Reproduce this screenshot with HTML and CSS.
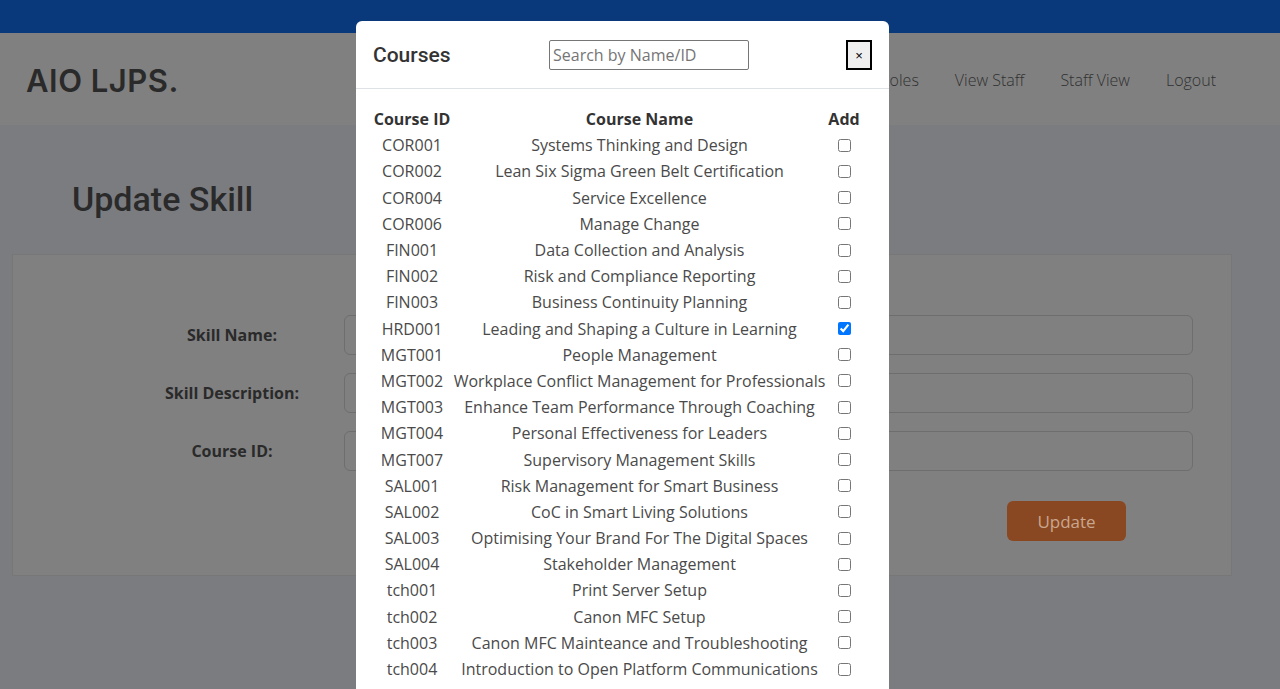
FILE: index.html
```html
<!DOCTYPE html>
<html lang="en">
<head>
<meta charset="utf-8">
<title>Update Skill</title>
<link rel="stylesheet" href="styles.css">
</head>
<body>
<div class="topbar"></div>
<header class="navbar">
  <div class="logo">AIO LJPS.</div>
  <nav class="nav">
    <a>View Roles</a>
    <a>View Staff</a>
    <a>Staff View</a>
    <a>Logout</a>
  </nav>
</header>
<main class="main">
  <h1 class="page-title">Update Skill</h1>
  <section class="card">
    <div class="form-row">
      <label class="form-label">Skill Name:</label>
      <div class="form-input"></div>
    </div>
    <div class="form-row">
      <label class="form-label">Skill Description:</label>
      <div class="form-input"></div>
    </div>
    <div class="form-row">
      <label class="form-label">Course ID:</label>
      <div class="form-input"></div>
    </div>
    <div class="actions">
      <button class="btn-update">Update</button>
    </div>
  </section>
</main>

<div class="modal">
  <div class="modal-header">
    <h5 class="modal-title">Courses</h5>
    <input class="search" type="text" placeholder="Search by Name/ID">
    <button class="close">×</button>
  </div>
  <div class="modal-body">
    <div class="table">
      <div class="th">Course ID</div><div class="th">Course Name</div><div class="th">Add</div>
      <div class="td">COR001</div><div class="td">Systems Thinking and Design</div><div class="td"><input type="checkbox"></div>
      <div class="td">COR002</div><div class="td">Lean Six Sigma Green Belt Certification</div><div class="td"><input type="checkbox"></div>
      <div class="td">COR004</div><div class="td">Service Excellence</div><div class="td"><input type="checkbox"></div>
      <div class="td">COR006</div><div class="td">Manage Change</div><div class="td"><input type="checkbox"></div>
      <div class="td">FIN001</div><div class="td">Data Collection and Analysis</div><div class="td"><input type="checkbox"></div>
      <div class="td">FIN002</div><div class="td">Risk and Compliance Reporting</div><div class="td"><input type="checkbox"></div>
      <div class="td">FIN003</div><div class="td">Business Continuity Planning</div><div class="td"><input type="checkbox"></div>
      <div class="td">HRD001</div><div class="td">Leading and Shaping a Culture in Learning</div><div class="td"><input type="checkbox" checked></div>
      <div class="td">MGT001</div><div class="td">People Management</div><div class="td"><input type="checkbox"></div>
      <div class="td">MGT002</div><div class="td">Workplace Conflict Management for Professionals</div><div class="td"><input type="checkbox"></div>
      <div class="td">MGT003</div><div class="td">Enhance Team Performance Through Coaching</div><div class="td"><input type="checkbox"></div>
      <div class="td">MGT004</div><div class="td">Personal Effectiveness for Leaders</div><div class="td"><input type="checkbox"></div>
      <div class="td">MGT007</div><div class="td">Supervisory Management Skills</div><div class="td"><input type="checkbox"></div>
      <div class="td">SAL001</div><div class="td">Risk Management for Smart Business</div><div class="td"><input type="checkbox"></div>
      <div class="td">SAL002</div><div class="td">CoC in Smart Living Solutions</div><div class="td"><input type="checkbox"></div>
      <div class="td">SAL003</div><div class="td">Optimising Your Brand For The Digital Spaces</div><div class="td"><input type="checkbox"></div>
      <div class="td">SAL004</div><div class="td">Stakeholder Management</div><div class="td"><input type="checkbox"></div>
      <div class="td">tch001</div><div class="td">Print Server Setup</div><div class="td"><input type="checkbox"></div>
      <div class="td">tch002</div><div class="td">Canon MFC Setup</div><div class="td"><input type="checkbox"></div>
      <div class="td">tch003</div><div class="td">Canon MFC Mainteance and Troubleshooting</div><div class="td"><input type="checkbox"></div>
      <div class="td">tch004</div><div class="td">Introduction to Open Platform Communications</div><div class="td"><input type="checkbox"></div>
      <div class="td"></div><div class="td"></div><div class="td"><input type="checkbox"></div>
    </div>
  </div>
</div>
</body>
</html>
```
FILE: styles.css
```css
* { box-sizing: border-box; }
html, body { height: 100%; }
body {
  margin: 0;
  background: #7b7c80;
  font-family: "Open Sans", "Liberation Sans", sans-serif;
  color: #2a2a2a;
  overflow: hidden;
  position: relative;
}
.topbar { height: 33px; background: #0a397b; }
.navbar {
  height: 92px;
  background: #808080;
  display: flex;
  align-items: center;
  padding: 0 26px;
}
.logo {
  font-family: "Inter", "Liberation Sans", sans-serif;
  font-weight: 600;
  font-size: 31px;
  letter-spacing: 0.5px;
  color: #2a2a2a;
  padding-top: 2px;
}
.nav { margin-left: auto; display: flex; gap: 36px; margin-right: 38px; padding-top: 2px; }
.nav a { font-size: 16px; font-weight: 300; color: #303030; }
.main { padding: 0 48px 0 12px; }
.page-title {
  font-family: Roboto, "Liberation Sans", sans-serif;
  font-weight: 500;
  font-size: 34px;
  line-height: 40px;
  margin: 54px 0 35px 60px;
  color: #2a2a2a;
}
.card {
  height: 322px;
  background: #808080;
  border: 1px solid #777;
  padding-top: 60px;
}
.form-row { display: flex; align-items: center; height: 40px; margin-bottom: 18px; }
.form-label {
  width: 224px;
  margin-left: 107px;
  text-align: center;
  font-weight: 700;
  font-size: 16px;
  color: #2a2a2a;
}
.form-input {
  width: 849px;
  height: 40px;
  border: 1px solid #6e6e6e;
  border-radius: 6px;
  background: #808080;
}
.actions { display: flex; justify-content: flex-end; padding-right: 105px; margin-top: 30px; }
.btn-update {
  width: 119px;
  height: 40px;
  border: none;
  border-radius: 6px;
  background: #8a4822;
  color: #c9a68e;
  font-family: "Open Sans", sans-serif;
  font-size: 17px;
}
.modal {
  position: absolute;
  left: 356px;
  top: 21px;
  width: 533px;
  height: 700px;
  background: #fff;
  border-radius: 6px 6px 0 0;
}
.modal-header {
  height: 68px;
  display: flex;
  align-items: center;
  padding: 1px 17px 0;
  border-bottom: 1px solid #dee2e6;
}
.modal-title {
  margin: 0;
  font-family: Roboto, "Liberation Sans", sans-serif;
  font-weight: 500;
  font-size: 21px;
  color: #333;
  width: 176px;
}
.search {
  width: 200px;
  height: 30px;
  border: 1px solid #767676;
  border-radius: 2px;
  padding: 0 3px;
  font-family: "Open Sans", sans-serif;
  font-size: 16px;
  color: #333;
}
.search::placeholder { color: #757575; }
.close {
  margin-left: auto;
  width: 26px;
  height: 30px;
  border: 2px solid #000;
  background: #efefef;
  padding: 0;
  font-size: 13px;
  color: #000;
}
.modal-body { padding: 17px 16px 0 16px; }
.table {
  display: grid;
  grid-template-columns: 80px 375px 34px;
  grid-auto-rows: 26.2px;
  align-items: center;
  text-align: center;
}
.th { font-weight: 700; font-size: 16px; color: #333; }
.td { font-size: 16px; color: #4a4a4a; white-space: nowrap; display: flex; justify-content: center; align-items: center; height: 100%; }
.td input { margin: 0 0 0 1px; width: 13px; height: 13px; }
```
